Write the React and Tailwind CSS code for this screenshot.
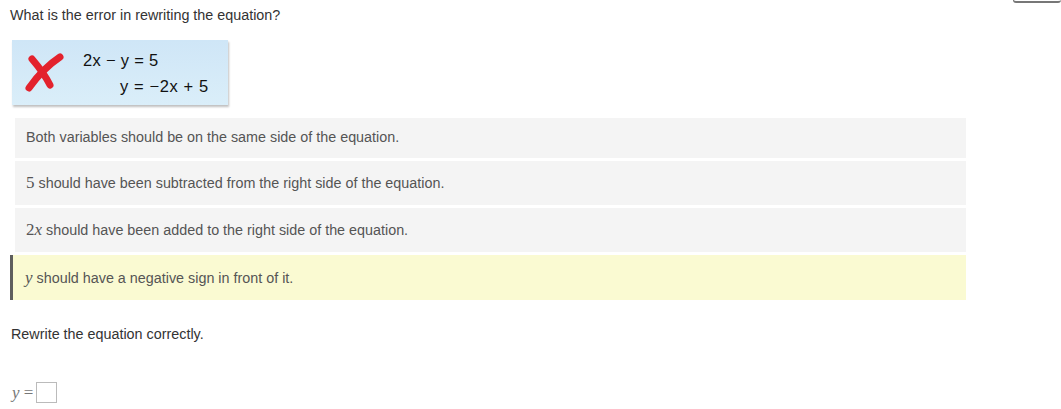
export default function App() {
  const options = [
    { lead: "", text: "Both variables should be on the same side of the equation.", h: "h-[40px]" },
    { lead: "5", text: " should have been subtracted from the right side of the equation.", h: "h-[44px]" },
    { lead: "2x", text: " should have been added to the right side of the equation.", h: "h-[44px]" },
    { lead: "y", text: " should have a negative sign in front of it.", h: "h-[45px]", selected: true },
  ];

  return (
    <div className="relative min-h-screen w-full bg-white font-['Liberation_Sans',Arial,sans-serif] text-[14.35px] text-[#333]">
      {/* stray button edge, top right */}
      <div className="absolute right-0 top-0 h-[3px] w-[48px] rounded-b-sm border-b-2 border-l border-[#777]" />

      <div className="pl-[10px] pt-[7px]">
        <p className="leading-[17px]">What is the error in rewriting the equation?</p>

        {/* figure */}
        <div className="ml-[2px] mt-[16px] flex h-[65px] w-[216px] items-start bg-gradient-to-b from-[#cfe6f7] to-[#daeef9] shadow-[1px_2px_2px_rgba(0,0,0,0.25)]">
          <svg width="42" height="40" viewBox="0 0 42 40" className="ml-[11px] mt-[13px] shrink-0">
            <path d="M6 35 C13 25 22 14 37 4" stroke="#e3222d" strokeWidth="7" strokeLinecap="round" fill="none" />
            <path d="M9 6 C15 13 22 22 27 32" stroke="#e3222d" strokeWidth="7" strokeLinecap="round" fill="none" />
          </svg>
          <div className="ml-[18px] mt-[11px] whitespace-pre font-['Liberation_Sans',Arial,sans-serif] text-[16.5px] leading-[18px] text-[#111]">
            <div className="tracking-[0.3px]">{"2x \u2212 y = 5"}</div>
            <div className="ml-[37px] mt-[8px] tracking-[0.6px]">{"y = \u22122x + 5"}</div>
          </div>
        </div>

        {/* options */}
        <div className="mt-[13px] flex w-[956px] flex-col gap-[3px]">
          {options.map((o, i) => (
            <div
              key={i}
              className={
                o.selected
                  ? `flex ${o.h} items-center border-l-[3px] border-[#5e5e5e] bg-[#fafad2] pl-[12px] text-[#555]`
                  : `ml-[5px] flex ${o.h} items-center bg-[#f4f4f4] pl-[11px] text-[#555]`
              }
            >
              <span>
                {o.lead === "5" && <span className="font-['Liberation_Serif',serif] text-[17px] text-[#555]">5</span>}
                {o.lead === "2x" && (
                  <span className="font-['Liberation_Serif',serif] text-[17px] text-[#555]">
                    2<i>x</i>
                  </span>
                )}
                {o.lead === "y" && <i className="font-['Liberation_Serif',serif] text-[17px] text-[#555]">y</i>}
                {o.text}
              </span>
            </div>
          ))}
        </div>

        <p className="ml-[1px] mt-[26px] leading-[17px]">Rewrite the equation correctly.</p>

        <div className="ml-[2px] mt-[37px] flex items-center">
          <span className="whitespace-pre font-['Liberation_Serif',serif] text-[17px] text-[#777]">
            <i>y</i>{" ="}
          </span>
          <div className="ml-[3px] h-[21px] w-[21px] border border-[#bbb] bg-white" />
        </div>
      </div>
    </div>
  );
}
